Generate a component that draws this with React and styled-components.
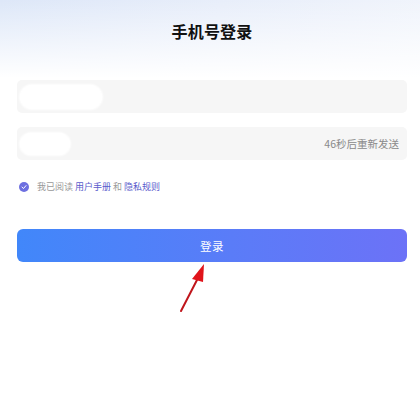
import React from "react";
import styled, { createGlobalStyle } from "styled-components";

const Global = createGlobalStyle`
  html, body { margin: 0; padding: 0; background: #fff; }
  body { font-family: "Noto Sans CJK SC", "Noto Sans", sans-serif; }
  * { box-sizing: border-box; }
`;

const Page = styled.div`
  position: relative;
  width: 420px;
  height: 408px;
  overflow: hidden;
  background: linear-gradient(180deg, rgba(255,255,255,0) 0px, #fff 78px),
    linear-gradient(100deg, #dde7f8 0%, #e8eefa 45%, #f3f6fc 100%);
  padding: 23px 13px 0 17px;
  display: flex;
  flex-direction: column;
`;

const Title = styled.h1`
  margin: 0;
  font-size: 16px;
  line-height: 16px;
  font-weight: 700;
  color: #111;
  text-align: center;
  letter-spacing: 0.2px;
`;

const Form = styled.div`
  margin-top: 41px;
  display: flex;
  flex-direction: column;
  gap: 14px;
`;

const Field = styled.div`
  height: 33px;
  border-radius: 5px;
  background: #f6f6f6;
  display: flex;
  align-items: center;
  padding: 0 8px 0 3px;
`;

const Mask = styled.div`
  width: ${(p) => p.$w}px;
  height: ${(p) => p.$h}px;
  border-radius: ${(p) => p.$h / 2}px;
  background: #fff;
  box-shadow: 0 0 2px 1px rgba(255,255,255,0.9);
`;

const Countdown = styled.span`
  margin-left: auto;
  font-size: 10.5px;
  color: #8a8a8a;
  letter-spacing: 0;
`;

const Agree = styled.div`
  margin-top: 20px;
  display: flex;
  align-items: center;
  gap: 8px;
  padding-left: 2px;
  font-size: 9px;
  color: #999;
`;

const Check = styled.span`
  width: 10px;
  height: 10px;
  border-radius: 50%;
  background: #6d6fe0;
  display: inline-flex;
  align-items: center;
  justify-content: center;
`;

const Link = styled.span`
  color: #5a5ccc;
`;

const Button = styled.button`
  margin-top: 36px;
  height: 33px;
  border: none;
  border-radius: 6px;
  background: linear-gradient(90deg, #4187fa 0%, #5a7cf8 55%, #6c72f7 100%);
  color: #fff;
  font-family: inherit;
  font-size: 11.5px;
  letter-spacing: 0.5px;
  display: flex;
  align-items: center;
  justify-content: center;
`;

const Arrow = styled.svg`
  position: absolute;
  left: 0;
  top: 0;
  pointer-events: none;
`;

export default function App() {
  return (
    <>
      <Global />
      <Page>
        <Title>手机号登录</Title>
        <Form>
          <Field>
            <Mask $w={82} $h={24} />
          </Field>
          <Field>
            <Mask $w={50} $h={22} />
            <Countdown>46秒后重新发送</Countdown>
          </Field>
        </Form>
        <Agree>
          <Check>
            <svg width="6" height="6" viewBox="0 0 6 6">
              <path d="M1 3.1 L2.5 4.5 L5 1.6" fill="none" stroke="#fff" strokeWidth="1" strokeLinecap="round" strokeLinejoin="round" />
            </svg>
          </Check>
          <span>
            我已阅读 <Link>用户手册</Link> 和 <Link>隐私规则</Link>
          </span>
        </Agree>
        <Button>登录</Button>
        <Arrow width="420" height="408" viewBox="0 0 420 408">
          <line x1="181" y1="311" x2="198" y2="278" stroke="#c0161c" strokeWidth="2" strokeLinecap="round" />
          <polygon points="204,264 192,279 203,282" fill="#e0141b" />
        </Arrow>
      </Page>
    </>
  );
}
